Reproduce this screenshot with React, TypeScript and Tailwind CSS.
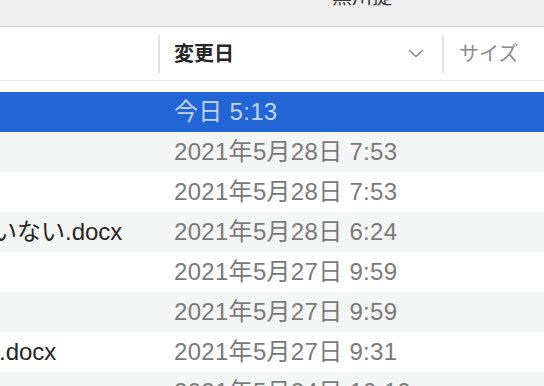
import React from "react";

const rows: { name: string; nameOffset: string; date: string; bg: string }[] = [
  { name: "", nameOffset: "", date: "今日 5:13", bg: "sel" },
  { name: "", nameOffset: "", date: "2021年5月28日 7:53", bg: "gray" },
  { name: "", nameOffset: "", date: "2021年5月28日 7:53", bg: "white" },
  { name: "いない.docx", nameOffset: "ml-[-7px]", date: "2021年5月28日 6:24", bg: "gray" },
  { name: "", nameOffset: "", date: "2021年5月27日 9:59", bg: "white" },
  { name: "", nameOffset: "", date: "2021年5月27日 9:59", bg: "gray" },
  { name: ".docx", nameOffset: "ml-[-1px]", date: "2021年5月27日 9:31", bg: "white" },
  { name: "", nameOffset: "", date: "2021年5月24日 10:10", bg: "gray" },
];

export default function App() {
  return (
    <div
      className="w-[544px] h-[386px] overflow-hidden bg-white"
      style={{ fontFamily: '"Liberation Sans", "Noto Sans CJK JP", sans-serif' }}
    >
      {/* toolbar */}
      <div className="h-[27px] bg-[#efefef] border-b border-[#d6d6d6] overflow-hidden flex">
        <div className="ml-[332px] mt-[-13px] text-[20px] leading-[20px] text-[#3a3a3a] whitespace-nowrap">
          黒川提
        </div>
      </div>
      {/* header */}
      <div className="h-[54px] border-b border-[#e4e4e4] flex items-center">
        <div className="w-[158px] shrink-0" />
        <div className="w-[2px] h-[38px] bg-[#e2e2e2] shrink-0" />
        <div className="w-[282px] shrink-0 flex items-center pl-[14px] pr-[18px]">
          <span className="text-[20px] font-bold text-[#262626] leading-none">変更日</span>
          <svg className="ml-auto" width="16" height="9" viewBox="0 0 16 9">
            <polyline
              points="1.5,1.5 8,7.5 14.5,1.5"
              fill="none"
              stroke="#8a8a8a"
              strokeWidth="1.6"
              strokeLinecap="round"
              strokeLinejoin="round"
            />
          </svg>
        </div>
        <div className="w-[2px] h-[38px] bg-[#e2e2e2] shrink-0" />
        <div className="pl-[15px] text-[20px] text-[#8a8a8a] leading-none whitespace-nowrap">
          サイズ
        </div>
      </div>
      {/* spacer */}
      <div className="h-[11px]" />
      {/* rows */}
      <div className="flex flex-col">
        {rows.map((r, i) => (
          <div
            key={i}
            className={
              "h-[40px] shrink-0 flex items-center " +
              (r.bg === "sel" ? "bg-[#2266d6]" : r.bg === "gray" ? "bg-[#f4f5f5]" : "bg-white")
            }
          >
            <div className="w-[160px] shrink-0 overflow-hidden whitespace-nowrap">
              {r.name ? (
                <span className={"block text-[24px] text-[#262626] " + r.nameOffset}>{r.name}</span>
              ) : null}
            </div>
            <div
              className={
                "pl-[14px] text-[24px] tracking-[0.3px] whitespace-nowrap " +
                (r.bg === "sel" ? "text-[#c3d5f5]" : "text-[#7a7a7a]")
              }
            >
              {r.date}
            </div>
          </div>
        ))}
      </div>
    </div>
  );
}
